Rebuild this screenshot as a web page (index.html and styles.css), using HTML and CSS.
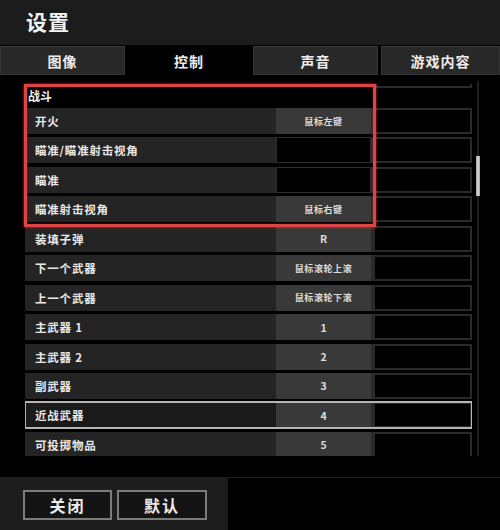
FILE: index.html
```html
<!DOCTYPE html>
<html lang="zh-CN">
<head>
<meta charset="utf-8">
<title>设置</title>
<link rel="stylesheet" href="styles.css">
</head>
<body>
<div class="app">
  <header class="title-bar"><h1 class="title">设置</h1></header>
  <nav class="tabs">
    <div class="tab t1">图像</div>
    <div class="tab t2 active">控制</div>
    <div class="tab t3">声音</div>
    <div class="tab t4">游戏内容</div>
  </nav>
  <main class="content">
    <div class="list">
      <div class="section-head"><span class="section-name">战斗</span><span class="tail"></span></div>
      <div class="row"><span class="label">开火</span><span class="key">鼠标左键</span><span class="alt"></span></div>
      <div class="row"><span class="label">瞄准/瞄准射击视角</span><span class="key empty"></span><span class="alt"></span></div>
      <div class="row"><span class="label">瞄准</span><span class="key empty"></span><span class="alt"></span></div>
      <div class="row"><span class="label">瞄准射击视角</span><span class="key">鼠标右键</span><span class="alt"></span></div>
      <div class="row"><span class="label">装填子弹</span><span class="key big">R</span><span class="alt"></span></div>
      <div class="row"><span class="label">下一个武器</span><span class="key">鼠标滚轮上滚</span><span class="alt"></span></div>
      <div class="row"><span class="label">上一个武器</span><span class="key">鼠标滚轮下滚</span><span class="alt"></span></div>
      <div class="row"><span class="label">主武器 1</span><span class="key big">1</span><span class="alt"></span></div>
      <div class="row"><span class="label">主武器 2</span><span class="key big">2</span><span class="alt"></span></div>
      <div class="row"><span class="label">副武器</span><span class="key big">3</span><span class="alt"></span></div>
      <div class="row selected"><span class="label">近战武器</span><span class="key big">4</span><span class="alt"></span></div>
      <div class="row"><span class="label">可投掷物品</span><span class="key big">5</span><span class="alt"></span></div>
    </div>
    <div class="scroll-track"><div class="scroll-thumb"></div></div>
    <div class="highlight-box"></div>
  </main>
  <footer class="footer">
    <div class="footer-panel">
      <button class="btn">关闭</button>
      <button class="btn">默认</button>
    </div>
  </footer>
</div>
</body>
</html>
```

FILE: styles.css
```css
* { box-sizing: border-box; }
html, body {
  margin: 0;
  padding: 0;
  background: #000;
}
body {
  font-family: "Noto Sans CJK SC", "Noto Sans", sans-serif;
  color: #e6e6e6;
}
.app {
  width: 500px;
  height: 530px;
  display: flex;
  flex-direction: column;
  overflow: hidden;
}
.title-bar {
  height: 45px;
  background: #1c1c1c;
  display: flex;
  align-items: center;
  padding-left: 26px;
}
.title {
  margin: 0;
  font-size: 21px;
  font-weight: 700;
  color: #f2f2f2;
  letter-spacing: 1px;
  line-height: 1;
  margin-top: -2px;
}
.tabs {
  height: 30px;
  display: flex;
  background: #000;
  margin-top: 1px;
}
.tab {
  height: 29px;
  display: flex;
  align-items: center;
  justify-content: center;
  font-size: 14px;
  font-weight: 700;
  letter-spacing: 1px;
  color: #eeeeee;
  background: #282828;
  border: 1px solid #333;
  border-top-color: #3a3a3a;
}
.t1 { width: 125px; }
.t2 { width: 128px; }
.t3 { width: 125px; }
.t4 { width: 119px; margin-left: 3px; }
.tab.active {
  background: #000;
  border-color: #000;
}
.content {
  position: relative;
  height: 398px;
  padding-top: 8px;
  padding-left: 25px;
  background: #000;
}
.list {
  width: 447px;
  height: 372px;
  overflow: hidden;
}
.section-head {
  height: 24px;
  display: flex;
  justify-content: space-between;
  align-items: flex-start;
}
.section-name {
  font-size: 12px;
  font-weight: 700;
  padding-left: 3px;
  padding-top: 6px;
  line-height: 1;
  color: #f0f0f0;
}
.tail {
  width: 97px;
  height: 4px;
  border: 2px solid #2a2a2a;
  border-top: none;
}
.row {
  height: 26px;
  margin-bottom: 3.45px;
  display: flex;
  background: #242424;
}
.label {
  width: 251px;
  display: flex;
  align-items: center;
  padding-left: 10px;
  font-size: 11.5px;
  font-weight: 700;
  letter-spacing: 0.8px;
  color: #e8e8e8;
}
.key {
  width: 95px;
  display: flex;
  align-items: center;
  justify-content: center;
  background: #393939;
  font-size: 9px;
  font-weight: 700;
  letter-spacing: 0.6px;
  color: #dcdcdc;
}
.key.big { font-size: 10.5px; letter-spacing: 0; }
.key.empty {
  background: #000;
  border: 1px solid #2c2c2c;
}
.alt {
  flex: 1;
  background: #000;
  border: 2px solid #2a2a2a;
  border-left-width: 4px;
}
.row.selected {
  outline: 2px solid #b4b4b4;
  outline-offset: -1px;
}
.row.selected .label { background: #1a1a1a; }
.scroll-track {
  position: absolute;
  left: 477px;
  top: 5px;
  width: 2px;
  height: 375px;
  background: #1e1e1e;
}
.scroll-thumb {
  position: absolute;
  left: -1px;
  top: 75px;
  width: 4px;
  height: 40px;
  background: linear-gradient(to right, #9a9a9a, #e0e0e0, #9a9a9a);
}
.highlight-box {
  position: absolute;
  left: 24px;
  top: 8px;
  width: 352px;
  height: 143px;
  border: 3px solid #dd4444;
  box-shadow: 0 0 3px rgba(255, 70, 70, 0.7), inset 0 0 2px rgba(255, 70, 70, 0.5);
  pointer-events: none;
}
.footer {
  flex: 1;
  border-top: 1px solid #202020;
  margin-top: 3px;
  display: flex;
}
.footer-panel {
  width: 228px;
  background: #1d1d1d;
  display: flex;
  gap: 5px;
  padding-left: 23px;
  padding-top: 12px;
  align-items: flex-start;
}
.btn {
  height: 30px;
  width: 89px;
  background: #141414;
  border: 2px solid #7c7c7c;
  color: #ececec;
  font-family: "Noto Sans CJK SC", "Noto Sans", sans-serif;
  font-size: 16px;
  font-weight: 700;
  letter-spacing: 2px;
  padding: 0;
  line-height: 1;
}
.btn + .btn { width: 90px; }
```
